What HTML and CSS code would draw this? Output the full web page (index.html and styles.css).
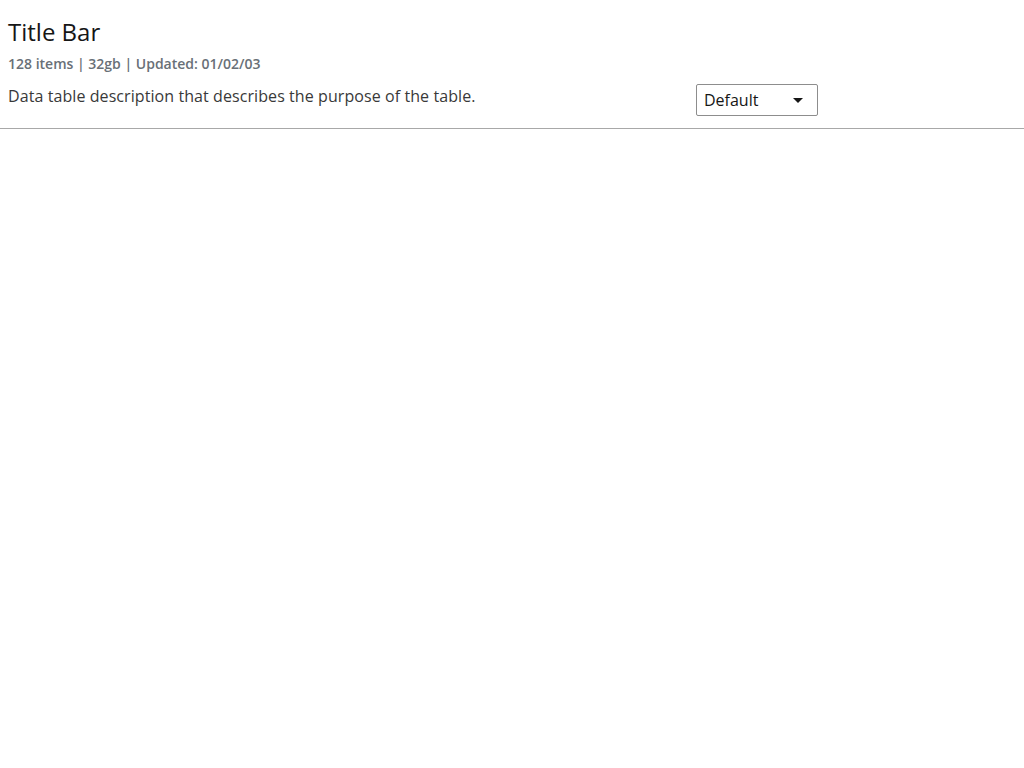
FILE: index.html
```html
<!DOCTYPE html>
<html>
<head>
<meta charset="utf-8">
<link rel="stylesheet" href="styles.css">
</head>
<body>
<header class="title-bar">
  <h1 class="title">Title Bar</h1>
  <div class="meta">128 items | 32gb | Updated: 01/02/03</div>
  <div class="row">
    <p class="desc">Data table description that describes the purpose of the table.</p>
    <div class="select">
      <span class="select-label">Default</span>
      <svg class="caret" width="10" height="5" viewBox="0 0 10 5"><path d="M0 0 L10 0 L5 5 Z" fill="#161616"/></svg>
    </div>
  </div>
</header>
</body>
</html>
```
FILE: styles.css
```css
html, body {
  margin: 0;
  padding: 0;
  background: #ffffff;
}
body {
  font-family: "Open Sans", "Liberation Sans", sans-serif;
  color: #161616;
}
.title-bar {
  padding: 16px 8px 12px 8px;
  border-bottom: 1px solid #a8a8a8;
}
.title {
  margin: 0;
  font-size: 24px;
  line-height: 32px;
  font-weight: 400;
  color: #161616;
}
.meta {
  margin-top: 6px;
  font-size: 14px;
  line-height: 20px;
  font-weight: 600;
  color: #697077;
}
.row {
  display: flex;
  align-items: flex-start;
  margin-top: 10px;
}
.desc {
  margin: 0;
  width: 688px;
  font-size: 16px;
  line-height: 24px;
  letter-spacing: 0.08px;
  color: #393939;
}
.select {
  box-sizing: border-box;
  width: 122px;
  height: 32px;
  border: 1px solid #8d8d8d;
  border-radius: 2px;
  display: flex;
  align-items: center;
  justify-content: space-between;
  padding: 0 14px 0 7px;
}
.select-label {
  font-size: 16px;
  line-height: 20px;
  color: #161616;
}
.caret {
  display: block;
}
```
